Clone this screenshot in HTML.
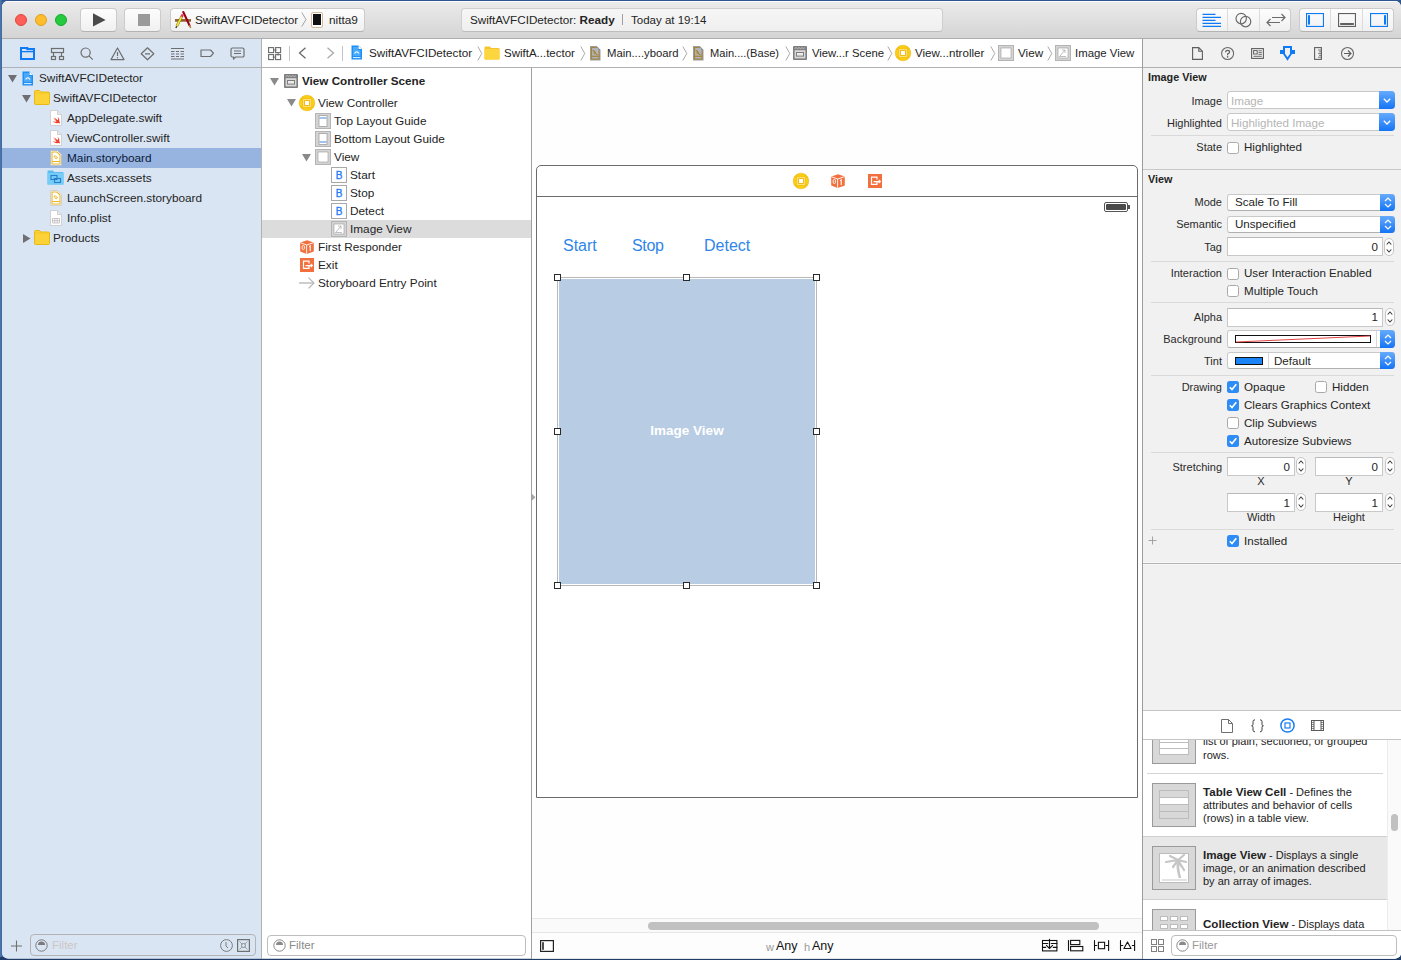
<!DOCTYPE html>
<html><head><meta charset="utf-8">
<style>
*{box-sizing:border-box;margin:0;padding:0}
html,body{width:1401px;height:960px;overflow:hidden;background:linear-gradient(90deg,#4a74aa 0px,#4a74aa 1px,#3a6298 2px,#2f568c 100%)}
body{font-family:"Liberation Sans",sans-serif;font-size:12px;color:#242424;position:relative}
.a{position:absolute}
svg{position:absolute;overflow:visible}
#win{position:absolute;left:0;top:0;width:1401px;height:960px;clip-path:inset(1px 0 1.4px 2px round 6px);background:#fff}
.btn{position:absolute;background:linear-gradient(#fdfdfd,#f0f0f0);border:1px solid #cbcbcb;border-bottom-color:#b3b3b3;border-radius:4px;height:23.5px;top:8px}
.t{position:absolute;white-space:nowrap;line-height:14px;font-size:11.8px}
.b{font-weight:bold}
.vl{position:absolute;width:1px;background:#b1b1b1}
.hd{width:7px;height:7px;background:#fff;border:1.2px solid #2a2a2a}
.lb{position:absolute;left:1140px;width:82px;text-align:right;font-size:11px;color:#2a2a2a;margin-top:-1px}
.ct{font-size:11.6px;margin-top:-1px}
.lb2{text-align:center;font-size:11px;color:#2a2a2a;margin-top:-1px}
.libicon{width:44px;height:44px;background:#d8d8d8;border:1px solid #9a9a9a}
.lt{font-size:11px;line-height:13px;color:#222}
.lbd{font-size:11.6px}
.hl{position:absolute;height:1px;background:#b1b1b1}
</style></head><body>
<div class="a" style="left:0;top:957px;width:1401px;height:3px;background:#203c68"></div>
<div class="a" style="left:2px;top:0;width:1399px;height:1px;background:#2e5590"></div>
<div id="win">
  <!-- ============ TOOLBAR ============ -->
  <div class="a" style="left:0;top:0;width:1401px;height:38px;background:linear-gradient(#ececec,#d4d4d4)"></div>
  <div class="hl" style="left:0;top:38px;width:1401px;background:#adadad"></div>
  <div class="hl" style="left:0;top:1px;width:1401px;background:#fbfbfa"></div>
  <div class="a" style="left:15px;top:14px;width:12px;height:12px;border-radius:50%;background:#fd5e57;border:1px solid #e2463f"></div>
  <div class="a" style="left:35px;top:14px;width:12px;height:12px;border-radius:50%;background:#ffbd2e;border:1px solid #e1a116"></div>
  <div class="a" style="left:55px;top:14px;width:12px;height:12px;border-radius:50%;background:#27c93f;border:1px solid #12ac28"></div>
  <div class="btn" style="left:80px;width:37px"></div>
  <svg style="left:92px;top:13px" width="15" height="15"><path d="M1 0.3 L13.6 6.9 L1 13.6Z" fill="#4a4a4a"/></svg>
  <div class="btn" style="left:124px;width:37px"></div>
  <div class="a" style="left:138px;top:14px;width:12px;height:12px;background:#9a9a9a"></div>
  <div class="btn" style="left:170px;width:195px"></div>
  <!-- xcode hammer icon -->
  <svg style="left:174px;top:11px" width="18" height="18">
    <rect x="1" y="8.1" width="16" height="2.6" fill="#8e5e2e"/>
    <path d="M9.3 1 L15.6 14.6" stroke="#9c0012" stroke-width="2.1" stroke-linecap="round"/>
    <path d="M15.2 14 L16.8 17" stroke="#b07a40" stroke-width="1.4"/>
    <path d="M8.2 4.6 L2.8 15.2" stroke="#8a7a10" stroke-width="2.6"/>
    <path d="M8.2 4.6 L2.8 15.2" stroke="#f2ea3a" stroke-width="1.6"/>
    <path d="M8.8 3.4 L7.6 5.8" stroke="#e83060" stroke-width="2.4"/>
    <path d="M2.8 15.2 L1.8 17" stroke="#222" stroke-width="1.3"/>
  </svg>
  <div class="t" style="left:195px;top:13px;font-size:11.7px">SwiftAVFCIDetector</div>
  <svg style="left:301px;top:12px" width="6" height="16"><path d="M0.8 0.5 L5 7.5 L0.8 14.5" fill="none" stroke="#9a9a9a" stroke-width="0.9"/></svg>
  <div class="a" style="left:311px;top:12px;width:12px;height:16px;border:1px solid #d7b89a;border-radius:2px;background:#fff"></div>
  <div class="a" style="left:313px;top:14px;width:8px;height:11px;background:#111"></div>
  <div class="t" style="left:329px;top:13px">nitta9</div>

  <!-- status -->
  <div class="a" style="left:461px;top:8px;width:482px;height:23.5px;border-radius:4px;background:linear-gradient(#f6f6f6,#efefef);border:1px solid #cfcfcf;border-bottom-color:#bdbdbd"></div>
  <div class="t" style="left:470px;top:13px;font-size:11.7px">SwiftAVFCIDetector: <span class="b">Ready</span></div>
  <div class="a" style="left:622px;top:14px;width:1px;height:11px;background:#a0a0a0"></div>
  <div class="t" style="left:631px;top:13px;font-size:11.5px">Today at 19:14</div>

  <!-- right toolbar groups -->
  <div class="btn" style="left:1196px;width:95px"></div>
  <div class="vl" style="left:1227px;top:9px;height:22px;background:#dcdcdc"></div>
  <div class="vl" style="left:1259px;top:9px;height:22px;background:#dcdcdc"></div>
  <svg style="left:1202px;top:13px" width="20" height="15"><g stroke="#0f7af6" stroke-width="1.15">
    <path d="M0.5 1.3 H13.5"/><path d="M0.5 4.3 H19"/><path d="M0.5 7.3 H13.5"/><path d="M0.5 10.3 H19"/><path d="M0.5 13.3 H19"/></g></svg>
  <svg style="left:1235px;top:12px" width="18" height="16"><g fill="none" stroke="#6c6c6c" stroke-width="1.2">
    <circle cx="6.2" cy="6.6" r="5.2"/><circle cx="10.6" cy="9.6" r="5.2"/></g></svg>
  <svg style="left:1266px;top:13px" width="20" height="14"><g fill="none" stroke="#6c6c6c" stroke-width="1.2">
    <path d="M6 4.5 H19"/><path d="M15.5 1 L19 4.5 L15.5 8"/><path d="M1 9.5 H14"/><path d="M4.5 6 L1 9.5 L4.5 13"/></g></svg>
  <div class="btn" style="left:1299px;width:95px"></div>
  <div class="vl" style="left:1330px;top:9px;height:22px;background:#dcdcdc"></div>
  <div class="vl" style="left:1362px;top:9px;height:22px;background:#dcdcdc"></div>
  <svg style="left:1306px;top:13px" width="18" height="14"><rect x="0.55" y="0.55" width="16.9" height="12.9" fill="none" stroke="#0f7af6" stroke-width="1.1"/><rect x="2" y="2" width="2" height="9.8" rx="0.8" fill="#0f7af6"/></svg>
  <svg style="left:1338px;top:13px" width="18" height="14"><rect x="0.55" y="0.55" width="16.9" height="12.9" fill="none" stroke="#606060" stroke-width="1.1"/><rect x="2" y="10" width="14" height="2" rx="0.8" fill="#606060"/></svg>
  <svg style="left:1370px;top:13px" width="18" height="14"><rect x="0.55" y="0.55" width="16.9" height="12.9" fill="none" stroke="#0f7af6" stroke-width="1.1"/><rect x="14" y="2" width="2" height="9.8" rx="0.8" fill="#0f7af6"/></svg>

  <!-- ============ NAVIGATOR ============ -->
  <div class="a" style="left:0;top:39px;width:261px;height:921px;background:#d9e5f3"></div>
  <div class="hl" style="left:0;top:67px;width:261px"></div>
  <div class="a" style="left:0;top:148px;width:261px;height:20px;background:#97b4e0"></div>
  <div class="vl" style="left:261px;top:39px;height:921px"></div>
  <!-- nav icons -->
  <svg style="left:20px;top:47px" width="15" height="13"><path d="M0 0 H7.8 L8.8 1 H15 V13 H0 Z" fill="#0f7af6"/><rect x="2" y="5.3" width="11" height="5.7" fill="#d9e5f3"/><rect x="2" y="2" width="4.3" height="1.8" fill="#d9e5f3"/><rect x="2" y="3" width="11" height="0.8" fill="#d9e5f3"/></svg>
  <svg style="left:50px;top:47px" width="15" height="14"><g fill="none" stroke="#6e6e6e" stroke-width="1.2">
    <rect x="1.5" y="1.5" width="12" height="4"/><rect x="1.5" y="9.5" width="4" height="3"/><rect x="9.5" y="9.5" width="4" height="3"/><path d="M3.5 5.5 V9.5 M11.5 5.5 V9.5"/></g></svg>
  <svg style="left:80px;top:47px" width="14" height="14"><g fill="none" stroke="#6e6e6e" stroke-width="1.2"><circle cx="5.6" cy="5.6" r="4.6"/><path d="M8.9 8.9 L12.8 12.6"/></g></svg>
  <svg style="left:110px;top:47px" width="15" height="14"><g fill="none" stroke="#6e6e6e" stroke-width="1.2" stroke-linejoin="round"><path d="M7.5 1 L14 12.6 H1Z"/><path d="M7.5 5 V9"/></g><circle cx="7.5" cy="10.8" r="0.7" fill="#6e6e6e"/></svg>
  <svg style="left:140px;top:47px" width="15" height="14"><g fill="none" stroke="#6e6e6e" stroke-width="1.2" stroke-linejoin="round"><path d="M7.5 0.8 L13.8 6.8 L7.5 12.8 L1.2 6.8Z"/><path d="M5 6.8 H10"/></g></svg>
  <svg style="left:170px;top:47px" width="15" height="13"><g stroke="#6e6e6e" stroke-width="1.1"><path d="M1 1.5 H14"/><path d="M1 4.5 H4.5 M6 4.5 H9 M10.5 4.5 H14"/><path d="M1 7 H4.5 M6 7 H9 M10.5 7 H14"/><path d="M1 9.5 H4.5 M6 9.5 H9 M10.5 9.5 H14"/><path d="M1 12 H14"/></g></svg>
  <svg style="left:200px;top:49px" width="15" height="9"><path d="M1 1 H10.5 L13.5 4.2 L10.5 7.5 H1Z" fill="none" stroke="#6e6e6e" stroke-width="1.2" stroke-linejoin="round"/></svg>
  <svg style="left:230px;top:47px" width="15" height="14"><g fill="none" stroke="#6e6e6e" stroke-width="1.2" stroke-linejoin="round"><path d="M2.5 1 H12.5 Q14 1 14 2.5 V9 Q14 10 12.5 10 H5.5 L3.5 12 V10 H2.5 Q1 10 1 8.5 V2.5 Q1 1 2.5 1Z"/><path d="M4 4 H11 M4 6.5 H11"/></g></svg>

  <!-- nav tree -->
  <svg style="left:8px;top:75px" width="9" height="8"><path d="M0 0 H9 L4.5 7.5Z" fill="#6f6f73"/></svg>
  <svg style="left:22px;top:71px" width="12" height="15"><path d="M0.5 0.5 H7.5 L11 4 V14.5 H0.5Z" fill="#1f8ff8"/><path d="M7.5 0.5 L11 4 H7.5Z" fill="#f4f8fc"/><path d="M2 2 H7 V5 H9.5 V11 H2Z" fill="#49aaf9"/><path d="M3.6 8.6 Q5.75 4.8 7.9 8.6" fill="none" stroke="#fff" stroke-width="1.1"/><path d="M2 12.6 H9.5" stroke="#fff" stroke-width="0.9"/></svg>
  <div class="t" style="left:39px;top:71px">SwiftAVFCIDetector</div>

  <svg style="left:22px;top:95px" width="9" height="8"><path d="M0 0 H9 L4.5 7.5Z" fill="#6f6f73"/></svg>
  <svg style="left:34px;top:90px" width="16" height="15"><path d="M0.5 1.5 Q0.5 0.5 1.5 0.5 H5.5 L6.8 2 H14.5 Q15.5 2 15.5 3 V13.5 Q15.5 14.5 14.5 14.5 H1.5 Q0.5 14.5 0.5 13.5Z" fill="#fbd238" stroke="#e8b408" stroke-width="0.9"/><path d="M1 3 H15" stroke="#f2c420" stroke-width="0.8"/></svg>
  <div class="t" style="left:53px;top:91px">SwiftAVFCIDetector</div>

  <svg style="left:50px;top:110px" width="12" height="16"><path d="M0.5 0.5 H7.5 L11.5 4.5 V15.5 H0.5Z" fill="#fff" stroke="#c8c8c8" stroke-width="0.8"/><path d="M7.5 0.5 V4.5 H11.5" fill="#e6e6e6" stroke="#c8c8c8" stroke-width="0.8"/><path d="M7.5 6.5 Q10 9 9.3 11.5 Q10.2 12.6 10 13.6 Q9.2 12.8 8 13 Q5 13.8 2.2 10.8 Q4.8 12.4 6.6 11.4 Q4.6 9.8 3 7.6 Q5 9.4 6.4 10.2 Q5 8.6 4.2 7.2 Q6.8 9.6 8 10.2 Q8.6 8.6 7.5 6.5Z" fill="#f23c28"/></svg>
  <div class="t" style="left:67px;top:111px">AppDelegate.swift</div>
  <svg style="left:50px;top:130px" width="12" height="16"><path d="M0.5 0.5 H7.5 L11.5 4.5 V15.5 H0.5Z" fill="#fff" stroke="#c8c8c8" stroke-width="0.8"/><path d="M7.5 0.5 V4.5 H11.5" fill="#e6e6e6" stroke="#c8c8c8" stroke-width="0.8"/><path d="M7.5 6.5 Q10 9 9.3 11.5 Q10.2 12.6 10 13.6 Q9.2 12.8 8 13 Q5 13.8 2.2 10.8 Q4.8 12.4 6.6 11.4 Q4.6 9.8 3 7.6 Q5 9.4 6.4 10.2 Q5 8.6 4.2 7.2 Q6.8 9.6 8 10.2 Q8.6 8.6 7.5 6.5Z" fill="#f23c28"/></svg>
  <div class="t" style="left:67px;top:131px">ViewController.swift</div>
  <svg style="left:50px;top:150px" width="12" height="16"><path d="M0.5 0.5 H7.5 L11.5 4.5 V15.5 H0.5Z" fill="#fff" stroke="#b0b8c8" stroke-width="0.8"/><path d="M2 2 H7 L10 5 V14 H2Z" fill="none" stroke="#e8b628" stroke-width="1.1"/><path d="M2 11.5 H10" stroke="#e8b628" stroke-width="1.1"/><path d="M4 6 Q6 5 7.5 8 L6 9 Q4.5 7.5 4 6Z" fill="none" stroke="#e8b628" stroke-width="0.9"/></svg>
  <div class="t" style="left:67px;top:151px;color:#0a1a3a">Main.storyboard</div>
  <svg style="left:47px;top:170px" width="18" height="15"><path d="M0.5 1.5 Q0.5 0.5 1.5 0.5 H6 L7 2 H15.5 Q16.5 2 16.5 3 V14.5 H0.5Z" fill="#5bbcf0"/><rect x="0.5" y="3" width="16" height="11.5" fill="#76cdf8"/><rect x="4" y="5.5" width="6" height="4" fill="none" stroke="#2a7ec8" stroke-width="1.1"/><rect x="7.5" y="8.5" width="6" height="4" fill="none" stroke="#2a7ec8" stroke-width="1.1"/></svg>
  <div class="t" style="left:67px;top:171px">Assets.xcassets</div>
  <svg style="left:50px;top:190px" width="12" height="16"><path d="M0.5 0.5 H7.5 L11.5 4.5 V15.5 H0.5Z" fill="#fff" stroke="#c8c8c8" stroke-width="0.8"/><path d="M2 2 H7 L10 5 V14 H2Z" fill="none" stroke="#e8b628" stroke-width="1.1"/><path d="M2 11.5 H10" stroke="#e8b628" stroke-width="1.1"/><path d="M4 6 Q6 5 7.5 8 L6 9 Q4.5 7.5 4 6Z" fill="none" stroke="#e8b628" stroke-width="0.9"/></svg>
  <div class="t" style="left:67px;top:191px">LaunchScreen.storyboard</div>
  <svg style="left:50px;top:210px" width="12" height="16"><path d="M0.5 0.5 H7.5 L11.5 4.5 V15.5 H0.5Z" fill="#fff" stroke="#c8c8c8" stroke-width="0.8"/><path d="M7.5 0.5 V4.5 H11.5" fill="#e6e6e6" stroke="#c8c8c8" stroke-width="0.8"/><path d="M2.5 8.5 H9.5 V13 H2.5Z M2.5 10.7 H9.5 M4.8 8.5 V13 M7.2 8.5 V13" fill="none" stroke="#bcbcbc" stroke-width="0.8"/></svg>
  <div class="t" style="left:67px;top:211px">Info.plist</div>
  <svg style="left:23px;top:234px" width="8" height="9"><path d="M0 0 V9 L7.5 4.5Z" fill="#6f6f73"/></svg>
  <svg style="left:34px;top:230px" width="16" height="15"><path d="M0.5 1.5 Q0.5 0.5 1.5 0.5 H5.5 L6.8 2 H14.5 Q15.5 2 15.5 3 V13.5 Q15.5 14.5 14.5 14.5 H1.5 Q0.5 14.5 0.5 13.5Z" fill="#fbd238" stroke="#e8b408" stroke-width="0.9"/><path d="M1 3 H15" stroke="#f2c420" stroke-width="0.8"/></svg>
  <div class="t" style="left:53px;top:231px">Products</div>

  <!-- nav bottom -->
  <svg style="left:11px;top:940px" width="12" height="12"><path d="M5.5 0.5 V11.5 M0 6 H11" stroke="#707070" stroke-width="1.1"/></svg>
  <div class="a" style="left:30px;top:934px;width:226px;height:22px;border:1px solid #b3b3b3;border-radius:4px"></div>

  <!-- ============ OUTLINE ============ -->
  <div class="a" style="left:262px;top:39px;width:269px;height:921px;background:#fff"></div>
  <div class="hl" style="left:262px;top:67px;width:880px"></div>
  <div class="vl" style="left:531px;top:68px;height:892px;background:#a0a0a0"></div>
  <!-- jump bar -->
  <svg style="left:268px;top:47px" width="14" height="14"><g fill="none" stroke="#6a6a6a" stroke-width="1.1"><rect x="0.6" y="0.6" width="5" height="5"/><rect x="7.6" y="0.6" width="5" height="5"/><rect x="0.6" y="7.6" width="5" height="5"/><rect x="7.6" y="7.6" width="5" height="5"/><path d="M5.6 3.1 H8.6 M10.1 5.6 V8.6 M4.6 10.1 H7.6" stroke-width="0.9"/></g></svg>
  <div class="vl" style="left:289px;top:46px;height:15px;background:#c4c4c4"></div>
  <svg style="left:298px;top:47px" width="9" height="12"><path d="M7.5 0.8 L1.5 6 L7.5 11.2" fill="none" stroke="#6a6a6a" stroke-width="1.3"/></svg>
  <svg style="left:326px;top:47px" width="9" height="12"><path d="M1.5 0.8 L7.5 6 L1.5 11.2" fill="none" stroke="#a9a9a9" stroke-width="1.3"/></svg>
  <div class="vl" style="left:342px;top:46px;height:15px;background:#c4c4c4"></div>
  <svg style="left:351px;top:45px" width="12" height="15"><path d="M0.5 0.5 H7.5 L11 4 V14.5 H0.5Z" fill="#1f8ff8"/><path d="M7.5 0.5 L11 4 H7.5Z" fill="#f4f8fc"/><path d="M2 2 H7 V5 H9.5 V11 H2Z" fill="#49aaf9"/><path d="M3.6 8.6 Q5.75 4.8 7.9 8.6" fill="none" stroke="#fff" stroke-width="1.1"/><path d="M2 12.6 H9.5" stroke="#fff" stroke-width="0.9"/></svg>
  <div class="t" style="left:369px;top:46px;font-size:11.7px">SwiftAVFCIDetector</div>
  <svg style="left:477px;top:46px" width="6" height="15"><path d="M0.8 0.5 L4.8 7.5 L0.8 14.5" fill="none" stroke="#a0a0a0" stroke-width="0.9"/></svg>
  <svg style="left:484px;top:46px" width="16" height="14"><path d="M0.5 1.5 Q0.5 0.5 1.5 0.5 H6 L7 2 H14.5 Q15.5 2 15.5 3 V12.5 Q15.5 13.5 14.5 13.5 H1.5 Q0.5 13.5 0.5 12.5Z" fill="#f6c332"/><rect x="0.5" y="3" width="15" height="10.5" rx="1" fill="#fdd53e"/></svg>
  <div class="t" style="left:504px;top:46px;font-size:11.5px">SwiftA...tector</div>
  <svg style="left:580px;top:46px" width="6" height="15"><path d="M0.8 0.5 L4.8 7.5 L0.8 14.5" fill="none" stroke="#a0a0a0" stroke-width="0.9"/></svg>
  <svg style="left:590px;top:46px" width="12" height="15"><path d="M0 0 H6.5 L10.5 4 V14.5 H0Z" fill="#9c9ca4"/><path d="M6.5 0 L10.5 4 H6.5Z" fill="#86868c"/><path d="M5.8 1.5 H1.5 V13 H9 V4.5" fill="none" stroke="#a8852a" stroke-width="1.1"/><rect x="2.1" y="2.1" width="6.3" height="7.6" fill="#b4b4bc"/><path d="M1.5 10.3 H9" stroke="#a8852a" stroke-width="1.1"/><rect x="2.2" y="11" width="6.2" height="1.3" fill="#b4b4bc"/><path d="M2.6 4.4 Q4.6 4.4 5.2 6.6 Q5.8 8.6 7.6 8.6" fill="none" stroke="#a8852a" stroke-width="1.2"/><circle cx="4.6" cy="6.8" r="0.9" fill="none" stroke="#a8852a" stroke-width="0.8"/></svg>
  <div class="t" style="left:607px;top:46px;font-size:11.3px">Main....yboard</div>
  <svg style="left:682px;top:46px" width="6" height="15"><path d="M0.8 0.5 L4.8 7.5 L0.8 14.5" fill="none" stroke="#a0a0a0" stroke-width="0.9"/></svg>
  <svg style="left:693px;top:46px" width="12" height="15"><path d="M0 0 H6.5 L10.5 4 V14.5 H0Z" fill="#9c9ca4"/><path d="M6.5 0 L10.5 4 H6.5Z" fill="#86868c"/><path d="M5.8 1.5 H1.5 V13 H9 V4.5" fill="none" stroke="#a8852a" stroke-width="1.1"/><rect x="2.1" y="2.1" width="6.3" height="7.6" fill="#b4b4bc"/><path d="M1.5 10.3 H9" stroke="#a8852a" stroke-width="1.1"/><rect x="2.2" y="11" width="6.2" height="1.3" fill="#b4b4bc"/><path d="M2.6 4.4 Q4.6 4.4 5.2 6.6 Q5.8 8.6 7.6 8.6" fill="none" stroke="#a8852a" stroke-width="1.2"/><circle cx="4.6" cy="6.8" r="0.9" fill="none" stroke="#a8852a" stroke-width="0.8"/></svg>
  <div class="t" style="left:710px;top:46px;font-size:11.1px">Main....(Base)</div>
  <svg style="left:785px;top:46px" width="6" height="15"><path d="M0.8 0.5 L4.8 7.5 L0.8 14.5" fill="none" stroke="#a0a0a0" stroke-width="0.9"/></svg>
  <svg style="left:793px;top:46px" width="14" height="14"><rect x="0" y="0" width="14" height="14" rx="1" fill="#7e7e7e"/><path d="M1.5 2.6 L3 1.6 L4.5 2.6 L6 1.6 L7.5 2.6 L9 1.6 L10.5 2.6 L12 1.6" fill="none" stroke="#d8d8d8" stroke-width="0.7"/><rect x="1.6" y="4.2" width="10.8" height="8.2" fill="#d9d9d9"/><rect x="3.5" y="6.5" width="7" height="3.6" fill="#ececec" stroke="#7e7e7e" stroke-width="1"/></svg>
  <div class="t" style="left:812px;top:46px;font-size:11.3px">View...r Scene</div>
  <svg style="left:887px;top:46px" width="6" height="15"><path d="M0.8 0.5 L4.8 7.5 L0.8 14.5" fill="none" stroke="#a0a0a0" stroke-width="0.9"/></svg>
  <svg style="left:895px;top:45px" width="16" height="16"><circle cx="8" cy="8" r="7.8" fill="#fccd16" stroke="#ebb006" stroke-width="0.5"/><path d="M4 1 V15 M12 1 V15 M1 4 H15 M1 12 H15" stroke="#f0bb08" stroke-width="0.7"/><rect x="4" y="4" width="8" height="8" fill="#eab00a"/><rect x="4.6" y="4.6" width="6.8" height="6.8" fill="none" stroke="#fee07a" stroke-width="1.2"/><rect x="6" y="6" width="4" height="4" fill="#fff"/></svg>
  <div class="t" style="left:915px;top:46px;font-size:11.6px">View...ntroller</div>
  <svg style="left:990px;top:46px" width="6" height="15"><path d="M0.8 0.5 L4.8 7.5 L0.8 14.5" fill="none" stroke="#a0a0a0" stroke-width="0.9"/></svg>
  <svg style="left:998px;top:45px" width="16" height="16"><rect x="0.5" y="0.5" width="15" height="15" fill="#d4d4d4" stroke="#b4b4b4" stroke-width="1"/><rect x="3" y="3" width="10" height="10" fill="#fff" stroke="#9a9a9a" stroke-width="0.6"/></svg>
  <div class="t" style="left:1018px;top:46px;font-size:11.7px">View</div>
  <svg style="left:1047px;top:46px" width="6" height="15"><path d="M0.8 0.5 L4.8 7.5 L0.8 14.5" fill="none" stroke="#a0a0a0" stroke-width="0.9"/></svg>
  <svg style="left:1055px;top:45px" width="16" height="16"><rect x="0.5" y="0.5" width="15" height="15" fill="#d4d4d4" stroke="#b4b4b4" stroke-width="1"/><rect x="3" y="3" width="10" height="10" fill="#fff" stroke="#9a9a9a" stroke-width="0.6"/><path d="M5 11 L10 5 M7 5 L10 5 L10 8 M4 11.5 H11" fill="none" stroke="#b0b0b0" stroke-width="0.8"/></svg>
  <div class="t" style="left:1075px;top:46px;font-size:11.4px">Image View</div>



  <!-- outline tree -->
  <svg style="left:270px;top:78px" width="9" height="8"><path d="M0 0 H9 L4.5 7.5Z" fill="#8a8a8a"/></svg>
  <svg style="left:284px;top:74px" width="14" height="14"><rect x="0" y="0" width="14" height="14" rx="1" fill="#7e7e7e"/><path d="M1.5 2.6 L3 1.6 L4.5 2.6 L6 1.6 L7.5 2.6 L9 1.6 L10.5 2.6 L12 1.6" fill="none" stroke="#d8d8d8" stroke-width="0.7"/><rect x="1.6" y="4.2" width="10.8" height="8.2" fill="#d9d9d9"/><rect x="3.5" y="6.5" width="7" height="3.6" fill="#ececec" stroke="#7e7e7e" stroke-width="1"/></svg>
  <div class="t b" style="left:302px;top:74px;font-size:11.7px">View Controller Scene</div>
  <svg style="left:287px;top:99px" width="9" height="8"><path d="M0 0 H9 L4.5 7.5Z" fill="#8a8a8a"/></svg>
  <svg style="left:299px;top:95px" width="16" height="16"><circle cx="8" cy="8" r="7.8" fill="#fccd16" stroke="#ebb006" stroke-width="0.5"/><path d="M4 1 V15 M12 1 V15 M1 4 H15 M1 12 H15" stroke="#f0bb08" stroke-width="0.7"/><rect x="4" y="4" width="8" height="8" fill="#eab00a"/><rect x="4.6" y="4.6" width="6.8" height="6.8" fill="none" stroke="#fee07a" stroke-width="1.2"/><rect x="6" y="6" width="4" height="4" fill="#fff"/></svg>
  <div class="t" style="left:318px;top:96px">View Controller</div>
  <svg style="left:315px;top:113px" width="16" height="16"><rect x="0.5" y="0.5" width="15" height="15" fill="#d4d4d4" stroke="#b4b4b4"/><rect x="4" y="2.5" width="8" height="11" fill="#fff" stroke="#a0a0a0" stroke-width="0.8"/><path d="M4.5 5 H11.5" stroke="#2a7ad8" stroke-width="0.9"/></svg>
  <div class="t" style="left:334px;top:114px">Top Layout Guide</div>
  <svg style="left:315px;top:131px" width="16" height="16"><rect x="0.5" y="0.5" width="15" height="15" fill="#d4d4d4" stroke="#b4b4b4"/><rect x="4" y="2.5" width="8" height="11" fill="#fff" stroke="#a0a0a0" stroke-width="0.8"/><path d="M4.5 11 H11.5" stroke="#2a7ad8" stroke-width="0.9"/></svg>
  <div class="t" style="left:334px;top:132px">Bottom Layout Guide</div>
  <svg style="left:302px;top:154px" width="9" height="8"><path d="M0 0 H9 L4.5 7.5Z" fill="#8a8a8a"/></svg>
  <svg style="left:315px;top:149px" width="16" height="16"><rect x="0.5" y="0.5" width="15" height="15" fill="#d4d4d4" stroke="#b4b4b4"/><rect x="3" y="3" width="10" height="10" fill="#fff" stroke="#9a9a9a" stroke-width="0.6"/></svg>
  <div class="t" style="left:334px;top:150px">View</div>
  <svg style="left:331px;top:167px" width="16" height="16"><rect x="0.5" y="0.5" width="15" height="15" fill="#fff" stroke="#a8a8a8"/><text x="8.2" y="11.6" text-anchor="middle" font-family="Liberation Sans" font-size="10" fill="#1f7cf6" stroke="#1f7cf6" stroke-width="0.35">B</text></svg>
  <div class="t" style="left:350px;top:168px">Start</div>
  <svg style="left:331px;top:185px" width="16" height="16"><rect x="0.5" y="0.5" width="15" height="15" fill="#fff" stroke="#a8a8a8"/><text x="8.2" y="11.6" text-anchor="middle" font-family="Liberation Sans" font-size="10" fill="#1f7cf6" stroke="#1f7cf6" stroke-width="0.35">B</text></svg>
  <div class="t" style="left:350px;top:186px">Stop</div>
  <svg style="left:331px;top:203px" width="16" height="16"><rect x="0.5" y="0.5" width="15" height="15" fill="#fff" stroke="#a8a8a8"/><text x="8.2" y="11.6" text-anchor="middle" font-family="Liberation Sans" font-size="10" fill="#1f7cf6" stroke="#1f7cf6" stroke-width="0.35">B</text></svg>
  <div class="t" style="left:350px;top:204px">Detect</div>
  <div class="a" style="left:262px;top:220px;width:269px;height:18px;background:#dcdcdc"></div>
  <svg style="left:331px;top:221px" width="16" height="16"><rect x="0.5" y="0.5" width="15" height="15" fill="#d4d4d4" stroke="#b4b4b4"/><rect x="3" y="3" width="10" height="10" fill="#fff" stroke="#9a9a9a" stroke-width="0.6"/><path d="M5 11 L10 5 M7 5 L10 5 L10 8 M4 11.5 H11" fill="none" stroke="#b0b0b0" stroke-width="0.8"/></svg>
  <div class="t" style="left:350px;top:222px">Image View</div>
  <svg style="left:300px;top:240px" width="14" height="14"><path d="M7 0.2 L13.8 2.4 V11.4 L6.6 14 L0.2 11.4 V2.4 Z" fill="#f2703d"/><path d="M0.3 2.6 L6.6 5 L13.7 2.6 M6.6 5 V13.8" fill="none" stroke="#fff" stroke-width="0.9"/><rect x="2.2" y="5.6" width="2.2" height="3.8" rx="0.8" fill="none" stroke="#fff" stroke-width="0.9"/><path d="M9.2 6.8 L10.2 6 V11" fill="none" stroke="#fff" stroke-width="1.1"/></svg>
  <div class="t" style="left:318px;top:240px">First Responder</div>
  <svg style="left:300px;top:258px" width="14" height="14"><rect width="14" height="14" fill="#f2703d"/><path d="M9 5.5 V3.1 H3.5 V10.4 H9 V8" fill="none" stroke="#fff" stroke-width="1.2"/><path d="M5.6 7.6 H12.3 M10.8 6 L12.4 7.6 L10.8 9.2" fill="none" stroke="#fff" stroke-width="1.1"/></svg>
  <div class="t" style="left:318px;top:258px">Exit</div>
  <svg style="left:299px;top:277px" width="17" height="12"><path d="M0 6 H14.5" stroke="#c2c2c2" stroke-width="1.6"/><path d="M9.5 0.6 L15 6 L9.5 11.4" fill="none" stroke="#b4b4b4" stroke-width="1.1"/></svg>
  <div class="t" style="left:318px;top:276px">Storyboard Entry Point</div>
  <!-- outline filter -->
  <div class="a" style="left:267px;top:935px;width:259px;height:21px;border:1px solid #bdbdbd;border-radius:4px;background:#fff"></div>
  <svg style="left:273px;top:939px" width="13" height="13"><circle cx="6.5" cy="6.5" r="5.7" fill="none" stroke="#8a8a8a" stroke-width="1"/><path d="M3 6 A3.5 3.5 0 0 1 10 6Z" fill="#8a8a8a"/></svg>
  <div class="t" style="left:289px;top:938px;font-size:11.5px;color:#8a8a8a">Filter</div>
  <!-- ============ CANVAS ============ -->
  <div class="a" style="left:532px;top:68px;width:610px;height:892px;background:#fefefe"></div>


  <!-- scene -->
  <div class="a" style="left:536px;top:165px;width:602px;height:633px;border:1.4px solid #6b6b6b;border-radius:5px 5px 0 0;background:#fff"></div>
  <div class="hl" style="left:537px;top:195.6px;width:600px;height:1.4px;background:#6b6b6b"></div>
  <svg style="left:793px;top:173px" width="16" height="16"><circle cx="8" cy="8" r="7.8" fill="#fccd16" stroke="#ebb006" stroke-width="0.5"/><path d="M4 1 V15 M12 1 V15 M1 4 H15 M1 12 H15" stroke="#f0bb08" stroke-width="0.7"/><rect x="4" y="4" width="8" height="8" fill="#eab00a"/><rect x="4.6" y="4.6" width="6.8" height="6.8" fill="none" stroke="#fee07a" stroke-width="1.2"/><rect x="6" y="6" width="4" height="4" fill="#fff"/></svg>
  <svg style="left:831px;top:174px" width="14" height="14"><path d="M7 0.2 L13.8 2.4 V11.4 L6.6 14 L0.2 11.4 V2.4 Z" fill="#f2703d"/><path d="M0.3 2.6 L6.6 5 L13.7 2.6 M6.6 5 V13.8" fill="none" stroke="#fff" stroke-width="0.9"/><rect x="2.2" y="5.6" width="2.2" height="3.8" rx="0.8" fill="none" stroke="#fff" stroke-width="0.9"/><path d="M9.2 6.8 L10.2 6 V11" fill="none" stroke="#fff" stroke-width="1.1"/></svg>
  <svg style="left:868px;top:174px" width="14" height="14"><rect width="14" height="14" fill="#f2703d"/><path d="M9 5.5 V3.1 H3.5 V10.4 H9 V8" fill="none" stroke="#fff" stroke-width="1.2"/><path d="M5.6 7.6 H12.3 M10.8 6 L12.4 7.6 L10.8 9.2" fill="none" stroke="#fff" stroke-width="1.1"/></svg>
  <!-- battery -->
  <div class="a" style="left:1104px;top:202px;width:24px;height:10px;border:1px solid #555;border-radius:2px;background:#fff"></div>
  <div class="a" style="left:1106px;top:204px;width:20px;height:6px;background:#4a4a4a;border-radius:1px"></div>
  <div class="a" style="left:1128px;top:205px;width:1.5px;height:4px;background:#555"></div>
  <!-- buttons -->
  <div class="t" style="left:563px;top:237px;font-size:16px;line-height:18px;color:#2f86ea">Start</div>
  <div class="t" style="left:632px;top:237px;font-size:16px;line-height:18px;color:#2f86ea;letter-spacing:-0.3px">Stop</div>
  <div class="t" style="left:704px;top:237px;font-size:16px;line-height:18px;color:#2f86ea">Detect</div>
  <!-- image view -->
  <div class="a" style="left:557px;top:277px;width:260px;height:309px;background:#fff;border:1px solid #b8b8b8"></div>
  <div class="a" style="left:559px;top:279px;width:256px;height:305px;background:#b8cce4"></div>
  <div class="t b" style="left:557px;top:423px;width:260px;text-align:center;font-size:13.5px;line-height:16px;color:#fff">Image View</div>
  <div class="a hd" style="left:554px;top:274px"></div>
  <div class="a hd" style="left:683px;top:274px"></div>
  <div class="a hd" style="left:813px;top:274px"></div>
  <div class="a hd" style="left:554px;top:428px"></div>
  <div class="a hd" style="left:813px;top:428px"></div>
  <div class="a hd" style="left:554px;top:582px"></div>
  <div class="a hd" style="left:683px;top:582px"></div>
  <div class="a hd" style="left:813px;top:582px"></div>
  <svg style="left:532px;top:494px" width="4" height="7"><path d="M0 0 L3.5 3.3 L0 6.6Z" fill="#a6a6a6"/></svg>
  <!-- canvas bottom -->
  <div class="a" style="left:532px;top:918px;width:610px;height:15px;background:#fafafa;border-top:1px solid #e6e6e6;border-bottom:1px solid #e6e6e6"></div>
  <div class="a" style="left:648px;top:922px;width:451px;height:8px;border-radius:4px;background:#c1c1c1"></div>
  <div class="a" style="left:532px;top:933px;width:610px;height:27px;background:#fdfdfd"></div>
  <svg style="left:540px;top:940px" width="14" height="12"><rect x="0.6" y="0.6" width="12.8" height="10.8" fill="none" stroke="#222" stroke-width="1.2"/><rect x="2.2" y="2.2" width="1.6" height="7.6" fill="#222"/></svg>
  <div class="t" style="left:766px;top:939.5px;font-size:11px;color:#9a9a9a">w</div>
  <div class="t" style="left:776px;top:939px;font-size:12.5px;color:#111">Any</div>
  <div class="t" style="left:804px;top:939.5px;font-size:11px;color:#9a9a9a">h</div>
  <div class="t" style="left:812px;top:939px;font-size:12.5px;color:#111">Any</div>
  <svg style="left:1040px;top:938px" width="20" height="16"><g fill="none" stroke="#111" stroke-width="1.1" stroke-linecap="round"><rect x="2.5" y="2.5" width="14.4" height="10.4"/><path d="M2.5 5.5 H7.8 M11.2 5.5 H16.9 M2.5 9.4 H5.7 M13.3 9.4 H16.9"/><path d="M9.5 1.3 V10.5 M6.4 7.4 L9.5 10.5 L12.6 7.4"/></g></svg>
  <svg style="left:1066px;top:938px" width="20" height="16"><g fill="none" stroke="#111" stroke-width="1.1" stroke-linecap="round"><path d="M2.5 2.5 V12.5"/><rect x="4.6" y="2.4" width="9.2" height="4.2"/><rect x="4.6" y="8.5" width="12.2" height="4.3"/></g></svg>
  <svg style="left:1092px;top:938px" width="20" height="16"><g fill="none" stroke="#111" stroke-width="1.1" stroke-linecap="round"><path d="M2.5 2.5 V12.5 M16.6 2.5 V12.5 M2.5 7.5 H4.8 M14 7.5 H16.6"/><rect x="6.4" y="4.3" width="6.2" height="6.4"/></g></svg>
  <svg style="left:1118px;top:938px" width="20" height="16"><g fill="none" stroke="#111" stroke-width="1.1" stroke-linecap="round" stroke-linejoin="round"><path d="M2.5 2.5 V12.5 M16.6 2.5 V12.5 M2.5 7.5 H4.8 M14.3 7.5 H16.6"/><path d="M5.9 10.5 L9.5 4 L13 10.5Z"/></g></svg>
  <!-- ============ INSPECTOR ============ -->
  <div class="a" style="left:1143px;top:39px;width:258px;height:921px;background:#f1f1f1"></div>
  <div class="vl" style="left:1142px;top:39px;height:921px;background:#9c9c9c"></div>
  <div class="hl" style="left:1143px;top:562px;width:258px;background:#f8f8f8"></div>
  <div class="hl" style="left:1143px;top:563px;width:258px;background:#b3b3b3"></div>
  <div class="hl" style="left:1143px;top:564px;width:258px;background:#f8f8f8"></div>
  <!-- inspector tabs -->
  <svg style="left:1192px;top:47px" width="11" height="13"><path d="M0.6 0.6 H6.8 L10.4 4.2 V12.4 H0.6Z M6.8 0.6 V4.2 H10.4" fill="none" stroke="#5e5e5e" stroke-width="1.1"/></svg>
  <svg style="left:1221px;top:47px" width="13" height="13"><circle cx="6.6" cy="6.5" r="6" fill="none" stroke="#6a6a6a" stroke-width="1.1"/><path d="M4.6 5.2 Q4.6 3.3 6.6 3.3 Q8.6 3.3 8.6 5 Q8.6 6.3 6.6 7 V8.2" fill="none" stroke="#5e5e5e" stroke-width="1.2"/><circle cx="6.6" cy="9.9" r="0.8" fill="#5e5e5e"/></svg>
  <svg style="left:1251px;top:48px" width="13" height="11"><rect x="0.6" y="0.6" width="11.8" height="9.8" fill="none" stroke="#5e5e5e" stroke-width="1.1"/><rect x="2.6" y="2.6" width="3.6" height="3.4" fill="none" stroke="#5e5e5e" stroke-width="1"/><path d="M7.5 2.8 H10.8 M7.5 4.6 H10.8 M7.5 6.4 H10.8 M2.5 8.3 H10.8" stroke="#5e5e5e" stroke-width="0.9"/></svg>
  <svg style="left:1280px;top:46px" width="15" height="15"><path d="M3 0 H12 V4 H15 V8 H12 L7.5 14.8 L3 8 H0 V4 H3 Z" fill="#0f7af6"/><path d="M5 2 H10 V7.8 L7.5 11.2 L5 7.8 Z" fill="#f0f0f0"/></svg>
  <svg style="left:1314px;top:47px" width="8" height="13"><rect x="0.6" y="0.6" width="6.8" height="11.8" fill="none" stroke="#5e5e5e" stroke-width="1.1"/><path d="M4 3 H7 M5 4.8 H7 M4 6.6 H7 M5 8.4 H7 M4 10.2 H7" stroke="#5e5e5e" stroke-width="0.8"/></svg>
  <svg style="left:1341px;top:47px" width="13" height="13"><circle cx="6.5" cy="6.5" r="6" fill="none" stroke="#6a6a6a" stroke-width="1.1"/><path d="M3 6.5 H10 M7 3.5 L10 6.5 L7 9.5" fill="none" stroke="#5e5e5e" stroke-width="1.1"/></svg>
  <div class="hl" style="left:1143px;top:67px;width:258px"></div>
  <!-- Image View section -->
  <div class="t b" style="left:1148px;top:70px;font-size:10.8px">Image View</div>
  <div class="t lb" style="top:95px">Image</div>
  <div class="a" style="left:1227px;top:91px;width:168px;height:18px;border:1px solid #c8c8c8;border-radius:3px;background:#fff"></div>
  <div class="a" style="left:1379px;top:91px;width:16px;height:18px;background:linear-gradient(#66abfc,#1474f6);border-radius:0 4px 4px 0"></div>
  <svg style="left:1383px;top:98px" width="8" height="5"><path d="M0.8 0.8 L4 4 L7.2 0.8" fill="none" stroke="#fff" stroke-width="1.3"/></svg>
  <div class="t ct" style="left:1231px;top:95px;color:#b5b5b5">Image</div>
  <div class="t lb" style="top:117px">Highlighted</div>
  <div class="a" style="left:1227px;top:113px;width:168px;height:18px;border:1px solid #c8c8c8;border-radius:3px;background:#fff"></div>
  <div class="a" style="left:1379px;top:113px;width:16px;height:18px;background:linear-gradient(#66abfc,#1474f6);border-radius:0 4px 4px 0"></div>
  <svg style="left:1383px;top:120px" width="8" height="5"><path d="M0.8 0.8 L4 4 L7.2 0.8" fill="none" stroke="#fff" stroke-width="1.3"/></svg>
  <div class="t ct" style="left:1231px;top:117px;color:#b5b5b5">Highlighted Image</div>
  <div class="hl" style="left:1151px;top:135px;width:243px;background:#d9d9d9"></div>
  <div class="t lb" style="top:141px">State</div>
  <div class="a" style="left:1227px;top:142px;width:12px;height:12px;border:1px solid #a9a9a9;border-radius:2.5px;background:#fff"></div>
  <div class="t ct" style="left:1244px;top:141px">Highlighted</div>
  <div class="hl" style="left:1143px;top:169px;width:258px;background:#c8c8c8"></div>
  <div class="t b" style="left:1148px;top:172px;font-size:10.8px">View</div>
  <div class="t lb" style="top:196px">Mode</div>
  <div class="a" style="left:1227px;top:194px;width:168px;height:17px;border:1px solid #c9c9c9;border-bottom-color:#b0b0b0;border-radius:3px;background:#fff"></div>
  <div class="a" style="left:1380px;top:194px;width:15px;height:17px;background:linear-gradient(#66abfc,#1474f6);border-radius:0 4px 4px 0"></div>
  <svg style="left:1383.5px;top:197px" width="8" height="11"><path d="M1 4 L4 1 L7 4 M1 7 L4 10 L7 7" fill="none" stroke="#fff" stroke-width="1.2"/></svg>
  <div class="t ct" style="left:1235px;top:196px">Scale To Fill</div>
  <div class="t lb" style="top:218px">Semantic</div>
  <div class="a" style="left:1227px;top:216px;width:168px;height:17px;border:1px solid #c9c9c9;border-bottom-color:#b0b0b0;border-radius:3px;background:#fff"></div>
  <div class="a" style="left:1380px;top:216px;width:15px;height:17px;background:linear-gradient(#66abfc,#1474f6);border-radius:0 4px 4px 0"></div>
  <svg style="left:1383.5px;top:219px" width="8" height="11"><path d="M1 4 L4 1 L7 4 M1 7 L4 10 L7 7" fill="none" stroke="#fff" stroke-width="1.2"/></svg>
  <div class="t ct" style="left:1235px;top:218px">Unspecified</div>
  <div class="t lb" style="top:241px">Tag</div>
  <div class="a" style="left:1227px;top:237px;width:156px;height:19px;border:1px solid #c8c8c8;border-top-color:#b9b9b9;background:#fff"></div>
  <div class="t ct" style="left:1227px;width:151px;text-align:right;top:241px">0</div>
  <div class="a" style="left:1384px;top:238px;width:10px;height:18px;border:1px solid #c5c5c5;border-radius:5px;background:#fff"></div>
  <svg style="left:1386px;top:241px" width="6" height="12"><path d="M0.7 3.5 L3 1 L5.3 3.5 M0.7 8.5 L3 11 L5.3 8.5" fill="none" stroke="#3a3a3a" stroke-width="1.1"/></svg>
  <div class="hl" style="left:1151px;top:261px;width:243px;background:#d9d9d9"></div>
  <div class="t lb" style="top:267px">Interaction</div>
  <div class="a" style="left:1227px;top:268px;width:12px;height:12px;border:1px solid #a9a9a9;border-radius:2.5px;background:#fff"></div>
  <div class="t ct" style="left:1244px;top:267px">User Interaction Enabled</div>
  <div class="a" style="left:1227px;top:285px;width:12px;height:12px;border:1px solid #a9a9a9;border-radius:2.5px;background:#fff"></div>
  <div class="t ct" style="left:1244px;top:285px">Multiple Touch</div>
  <div class="hl" style="left:1151px;top:302px;width:243px;background:#d9d9d9"></div>
  <div class="t lb" style="top:311px">Alpha</div>
  <div class="a" style="left:1227px;top:308px;width:156px;height:19px;border:1px solid #c8c8c8;border-top-color:#b9b9b9;background:#fff"></div>
  <div class="t ct" style="left:1227px;width:151px;text-align:right;top:311px">1</div>
  <div class="a" style="left:1385px;top:308px;width:10px;height:18px;border:1px solid #c5c5c5;border-radius:5px;background:#fff"></div>
  <svg style="left:1387px;top:311px" width="6" height="12"><path d="M0.7 3.5 L3 1 L5.3 3.5 M0.7 8.5 L3 11 L5.3 8.5" fill="none" stroke="#3a3a3a" stroke-width="1.1"/></svg>
  <div class="t lb" style="top:333px">Background</div>
  <div class="a" style="left:1227px;top:330px;width:168px;height:18px;border:1px solid #c9c9c9;border-bottom-color:#b0b0b0;border-radius:3px;background:#fff"></div>
  <div class="a" style="left:1235px;top:335px;width:136px;height:8px;border:1px solid #111;background:#fff"></div>
  <svg style="left:1236px;top:336px" width="134" height="6"><path d="M0 6 L134 0" stroke="#e03030" stroke-width="0.9"/></svg>
  <div class="vl" style="left:1376px;top:331px;height:16px;background:#d8d8d8"></div>
  <div class="a" style="left:1380px;top:330px;width:15px;height:18px;background:linear-gradient(#66abfc,#1474f6);border-radius:0 4px 4px 0"></div>
  <svg style="left:1383.5px;top:334px" width="8" height="11"><path d="M1 4 L4 1 L7 4 M1 7 L4 10 L7 7" fill="none" stroke="#fff" stroke-width="1.2"/></svg>
  <div class="t lb" style="top:355px">Tint</div>
  <div class="a" style="left:1227px;top:352px;width:168px;height:17px;border:1px solid #c9c9c9;border-bottom-color:#b0b0b0;border-radius:3px;background:#fff"></div>
  <div class="a" style="left:1235px;top:357px;width:28px;height:8px;border:1px solid #111;background:#1a84f6"></div>
  <div class="vl" style="left:1268px;top:353px;height:15px;background:#d8d8d8"></div>
  <div class="a" style="left:1380px;top:352px;width:15px;height:17px;background:linear-gradient(#66abfc,#1474f6);border-radius:0 4px 4px 0"></div>
  <svg style="left:1383.5px;top:355px" width="8" height="11"><path d="M1 4 L4 1 L7 4 M1 7 L4 10 L7 7" fill="none" stroke="#fff" stroke-width="1.2"/></svg>
  <div class="t ct" style="left:1274px;top:355px">Default</div>
  <div class="hl" style="left:1151px;top:375px;width:243px;background:#d9d9d9"></div>
  <div class="t lb" style="top:381px">Drawing</div>
  <svg style="left:1227px;top:381px" width="12" height="12"><rect x="0" y="0" width="12" height="12" rx="2.5" fill="#2e8cf6"/><path d="M2.8 6.2 L5 8.6 L9.3 3.3" fill="none" stroke="#fff" stroke-width="1.6"/></svg>
  <div class="t ct" style="left:1244px;top:381px">Opaque</div>
  <div class="a" style="left:1315px;top:381px;width:12px;height:12px;border:1px solid #a9a9a9;border-radius:2.5px;background:#fff"></div>
  <div class="t ct" style="left:1332px;top:381px">Hidden</div>
  <svg style="left:1227px;top:399px" width="12" height="12"><rect x="0" y="0" width="12" height="12" rx="2.5" fill="#2e8cf6"/><path d="M2.8 6.2 L5 8.6 L9.3 3.3" fill="none" stroke="#fff" stroke-width="1.6"/></svg>
  <div class="t ct" style="left:1244px;top:399px">Clears Graphics Context</div>
  <div class="a" style="left:1227px;top:417px;width:12px;height:12px;border:1px solid #a9a9a9;border-radius:2.5px;background:#fff"></div>
  <div class="t ct" style="left:1244px;top:417px">Clip Subviews</div>
  <svg style="left:1227px;top:435px" width="12" height="12"><rect x="0" y="0" width="12" height="12" rx="2.5" fill="#2e8cf6"/><path d="M2.8 6.2 L5 8.6 L9.3 3.3" fill="none" stroke="#fff" stroke-width="1.6"/></svg>
  <div class="t ct" style="left:1244px;top:435px">Autoresize Subviews</div>
  <div class="hl" style="left:1151px;top:452px;width:243px;background:#d9d9d9"></div>
  <div class="t lb" style="top:461px">Stretching</div>
  <div class="a" style="left:1227px;top:457px;width:68px;height:19px;border:1px solid #c8c8c8;border-top-color:#b9b9b9;background:#fff"></div>
  <div class="t ct" style="left:1227px;width:63px;text-align:right;top:461px">0</div>
  <div class="a" style="left:1296px;top:457px;width:10px;height:18px;border:1px solid #c5c5c5;border-radius:5px;background:#fff"></div>
  <svg style="left:1298px;top:460px" width="6" height="12"><path d="M0.7 3.5 L3 1 L5.3 3.5 M0.7 8.5 L3 11 L5.3 8.5" fill="none" stroke="#3a3a3a" stroke-width="1.1"/></svg>
  <div class="a" style="left:1315px;top:457px;width:68px;height:19px;border:1px solid #c8c8c8;border-top-color:#b9b9b9;background:#fff"></div>
  <div class="t ct" style="left:1315px;width:63px;text-align:right;top:461px">0</div>
  <div class="a" style="left:1385px;top:457px;width:10px;height:18px;border:1px solid #c5c5c5;border-radius:5px;background:#fff"></div>
  <svg style="left:1387px;top:460px" width="6" height="12"><path d="M0.7 3.5 L3 1 L5.3 3.5 M0.7 8.5 L3 11 L5.3 8.5" fill="none" stroke="#3a3a3a" stroke-width="1.1"/></svg>
  <div class="t lb2" style="left:1227px;width:68px;top:475px">X</div>
  <div class="t lb2" style="left:1315px;width:68px;top:475px">Y</div>
  <div class="a" style="left:1227px;top:493px;width:68px;height:19px;border:1px solid #c8c8c8;border-top-color:#b9b9b9;background:#fff"></div>
  <div class="t ct" style="left:1227px;width:63px;text-align:right;top:497px">1</div>
  <div class="a" style="left:1296px;top:493px;width:10px;height:18px;border:1px solid #c5c5c5;border-radius:5px;background:#fff"></div>
  <svg style="left:1298px;top:496px" width="6" height="12"><path d="M0.7 3.5 L3 1 L5.3 3.5 M0.7 8.5 L3 11 L5.3 8.5" fill="none" stroke="#3a3a3a" stroke-width="1.1"/></svg>
  <div class="a" style="left:1315px;top:493px;width:68px;height:19px;border:1px solid #c8c8c8;border-top-color:#b9b9b9;background:#fff"></div>
  <div class="t ct" style="left:1315px;width:63px;text-align:right;top:497px">1</div>
  <div class="a" style="left:1385px;top:493px;width:10px;height:18px;border:1px solid #c5c5c5;border-radius:5px;background:#fff"></div>
  <svg style="left:1387px;top:496px" width="6" height="12"><path d="M0.7 3.5 L3 1 L5.3 3.5 M0.7 8.5 L3 11 L5.3 8.5" fill="none" stroke="#3a3a3a" stroke-width="1.1"/></svg>
  <div class="t lb2" style="left:1227px;width:68px;top:511px">Width</div>
  <div class="t lb2" style="left:1315px;width:68px;top:511px">Height</div>
  <div class="hl" style="left:1151px;top:529px;width:243px;background:#d9d9d9"></div>
  <svg style="left:1148px;top:536px" width="9" height="9"><path d="M4.5 0.5 V8.5 M0.5 4.5 H8.5" stroke="#9a9a9a" stroke-width="0.9"/></svg>
  <svg style="left:1227px;top:535px" width="12" height="12"><rect x="0" y="0" width="12" height="12" rx="2.5" fill="#2e8cf6"/><path d="M2.8 6.2 L5 8.6 L9.3 3.3" fill="none" stroke="#fff" stroke-width="1.6"/></svg>
  <div class="t ct" style="left:1244px;top:535px">Installed</div>


  <!-- ============ LIBRARY ============ -->
  <div class="hl" style="left:1143px;top:710px;width:258px;background:#c4c4c4"></div>
  <div class="a" style="left:1143px;top:711px;width:258px;height:249px;background:#fff"></div>
  <svg style="left:1221px;top:719px" width="12" height="14"><path d="M0.5 0.5 H7.5 L11.5 4.5 V13.5 H0.5Z M7.5 0.5 V4.5 H11.5" fill="none" stroke="#6e6e6e" stroke-width="1"/></svg>
  <svg style="left:1251px;top:719px" width="13" height="14"><g fill="none" stroke="#3e3e3e" stroke-width="1"><path d="M4 0.8 Q2 0.8 2 2.5 V5.3 Q2 6.7 0.6 6.8 Q2 6.9 2 8.3 V11.2 Q2 12.8 4 12.8"/><path d="M9 0.8 Q11 0.8 11 2.5 V5.3 Q11 6.7 12.4 6.8 Q11 6.9 11 8.3 V11.2 Q11 12.8 9 12.8"/></g></svg>
  <svg style="left:1280px;top:718px" width="15" height="15"><circle cx="7.5" cy="7.5" r="6.6" fill="none" stroke="#1a7cf4" stroke-width="1.5"/><rect x="5" y="5" width="5" height="5" fill="none" stroke="#1a7cf4" stroke-width="1.2"/></svg>
<svg style="left:1311px;top:720px" width="13" height="11"><rect x="0.5" y="0.5" width="12" height="10" fill="none" stroke="#5a5a5a" stroke-width="1"/><path d="M3 0.5 V10.5 M10 0.5 V10.5" stroke="#5a5a5a" stroke-width="1"/><path d="M0.5 2.5 H3 M0.5 4.5 H3 M0.5 6.5 H3 M0.5 8.5 H3 M10 2.5 H12.5 M10 4.5 H12.5 M10 6.5 H12.5 M10 8.5 H12.5" stroke="#5a5a5a" stroke-width="0.7"/></svg>
  <div class="a" style="left:1143px;top:740px;width:244px;height:190px;overflow:hidden;background:#fff">
    <!-- item 1 partial -->
    <div class="a libicon" style="left:9px;top:-20px"></div>
    <div class="a" style="left:16px;top:-4px;width:30px;height:7px;background:#fff;border:1px solid #bcbcbc"></div>
    <div class="a" style="left:16px;top:2px;width:30px;height:7px;background:#fff;border:1px solid #bcbcbc"></div>
    <div class="a" style="left:16px;top:8px;width:30px;height:7px;background:#fff;border:1px solid #bcbcbc"></div>
    <div class="t lt" style="left:60px;top:-5px">list of plain, sectioned, or grouped</div>
    <div class="t lt" style="left:60px;top:8.5px">rows.</div>
    <div class="hl" style="left:4px;top:33px;width:236px;background:#d4d4d4"></div>
    <!-- item 2 -->
    <div class="a libicon" style="left:9px;top:43px"></div>
    <div class="a" style="left:16px;top:50px;width:30px;height:8px;background:#d8d8d8;border:1px solid #bcbcbc"></div>
    <div class="a" style="left:16px;top:57px;width:30px;height:8px;background:#fff;border:1px solid #bcbcbc"></div>
    <div class="a" style="left:16px;top:64px;width:30px;height:8px;background:#d8d8d8;border:1px solid #bcbcbc"></div>
    <div class="a" style="left:16px;top:71px;width:30px;height:8px;background:#d8d8d8;border:1px solid #bcbcbc"></div>
    <div class="t lt" style="left:60px;top:45px"><b class="lbd">Table View Cell</b> - Defines the</div>
    <div class="t lt" style="left:60px;top:58.5px">attributes and behavior of cells</div>
    <div class="t lt" style="left:60px;top:71.5px">(rows) in a table view.</div>
    <!-- item 3 selected -->
    <div class="a" style="left:0;top:96px;width:244px;height:64px;background:#e8e8e8;border-top:1px solid #d0d0d0;border-bottom:1px solid #d0d0d0"></div>
    <div class="a libicon" style="left:9px;top:106px"></div>
    <div class="a" style="left:16px;top:113px;width:30px;height:30px;background:#fff;border:1px solid #bcbcbc"></div>
    <svg style="left:17px;top:114px" width="28" height="28"><path d="M20 24 Q17 14 18 6" fill="none" stroke="#c6c6c6" stroke-width="2.6"/><path d="M18 6 L6 8 M18 6 L10 2 M18 6 L24 1 M18 6 L26 8 M18 6 L13 13 M18 6 L24 16 M18 6 L21 12" stroke="#c6c6c6" stroke-width="2.2" stroke-linecap="round"/><path d="M2 26 H27" stroke="#d4d4d4" stroke-width="1.3"/></svg>
    <div class="t lt" style="left:60px;top:108px"><b class="lbd">Image View</b> - Displays a single</div>
    <div class="t lt" style="left:60px;top:121.5px">image, or an animation described</div>
    <div class="t lt" style="left:60px;top:134.5px">by an array of images.</div>
    <!-- item 4 -->
    <div class="a libicon" style="left:9px;top:169px"></div>
    <div class="a" style="left:17px;top:176px;width:8px;height:5px;border:1px solid #bcbcbc;background:#fff"></div>
    <div class="a" style="left:27px;top:176px;width:8px;height:5px;border:1px solid #bcbcbc;background:#fff"></div>
    <div class="a" style="left:37px;top:176px;width:8px;height:5px;border:1px solid #bcbcbc;background:#fff"></div>
    <div class="a" style="left:17px;top:184px;width:8px;height:5px;border:1px solid #bcbcbc;background:#fff"></div>
    <div class="a" style="left:27px;top:184px;width:8px;height:5px;border:1px solid #bcbcbc;background:#fff"></div>
    <div class="a" style="left:37px;top:184px;width:8px;height:5px;border:1px solid #bcbcbc;background:#fff"></div>
    <div class="t lt" style="left:60px;top:177px"><b class="lbd">Collection View</b> - Displays data</div>
  </div>
  <div class="hl" style="left:1143px;top:739px;width:258px;background:#c4c4c4"></div>
  <div class="a" style="left:1387px;top:740px;width:14px;height:190px;background:#fafafa;border-left:1px solid #ececec"></div>
  <div class="a" style="left:1391px;top:814px;width:7px;height:17px;border-radius:3.5px;background:#c1c1c1"></div>
  <div class="hl" style="left:1143px;top:930px;width:258px;background:#c4c4c4"></div>
  <div class="a" style="left:1143px;top:931px;width:258px;height:29px;background:#fff"></div>
  <svg style="left:1151px;top:939px" width="13" height="13"><g fill="none" stroke="#808080" stroke-width="1"><rect x="0.5" y="0.5" width="5" height="5"/><rect x="7.5" y="0.5" width="5" height="5"/><rect x="0.5" y="7.5" width="5" height="5"/><rect x="7.5" y="7.5" width="5" height="5"/></g></svg>
  <div class="a" style="left:1171px;top:935px;width:226px;height:21px;border:1px solid #bdbdbd;border-radius:4px;background:#fff"></div>
  <svg style="left:1176px;top:939px" width="13" height="13"><circle cx="6.5" cy="6.5" r="5.7" fill="none" stroke="#8a8a8a" stroke-width="1"/><path d="M3 6 A3.5 3.5 0 0 1 10 6Z" fill="#8a8a8a"/></svg>
  <div class="t" style="left:1192px;top:938px;font-size:11.5px;color:#9a9a9a">Filter</div>

  <!-- nav filter -->
  <svg style="left:35px;top:939px" width="13" height="13"><circle cx="6.5" cy="6.5" r="5.7" fill="none" stroke="#7a7a7a" stroke-width="1"/><path d="M3 6 A3.5 3.5 0 0 1 10 6Z" fill="#7a7a7a"/></svg>
  <div class="t" style="left:52px;top:938px;font-size:11.5px;color:#cdc6c4">Filter</div>
  <svg style="left:220px;top:939px" width="13" height="13"><circle cx="6.5" cy="6.5" r="5.9" fill="none" stroke="#7a7a7a" stroke-width="1"/><path d="M6 3 V7 L8 9" fill="none" stroke="#7a7a7a" stroke-width="1"/></svg>
  <svg style="left:237px;top:939px" width="13" height="13"><rect x="0.6" y="0.6" width="11.8" height="11.8" fill="none" stroke="#707070" stroke-width="1.2"/><circle cx="6.5" cy="6.5" r="2" fill="none" stroke="#8a8a8a" stroke-width="1"/><path d="M2.5 2.5 L5 5 M10.5 2.5 L8 5 M2.5 10.5 L5 8 M10.5 10.5 L8 8" stroke="#8a8a8a" stroke-width="0.8"/></svg>
</div>
</body></html>
